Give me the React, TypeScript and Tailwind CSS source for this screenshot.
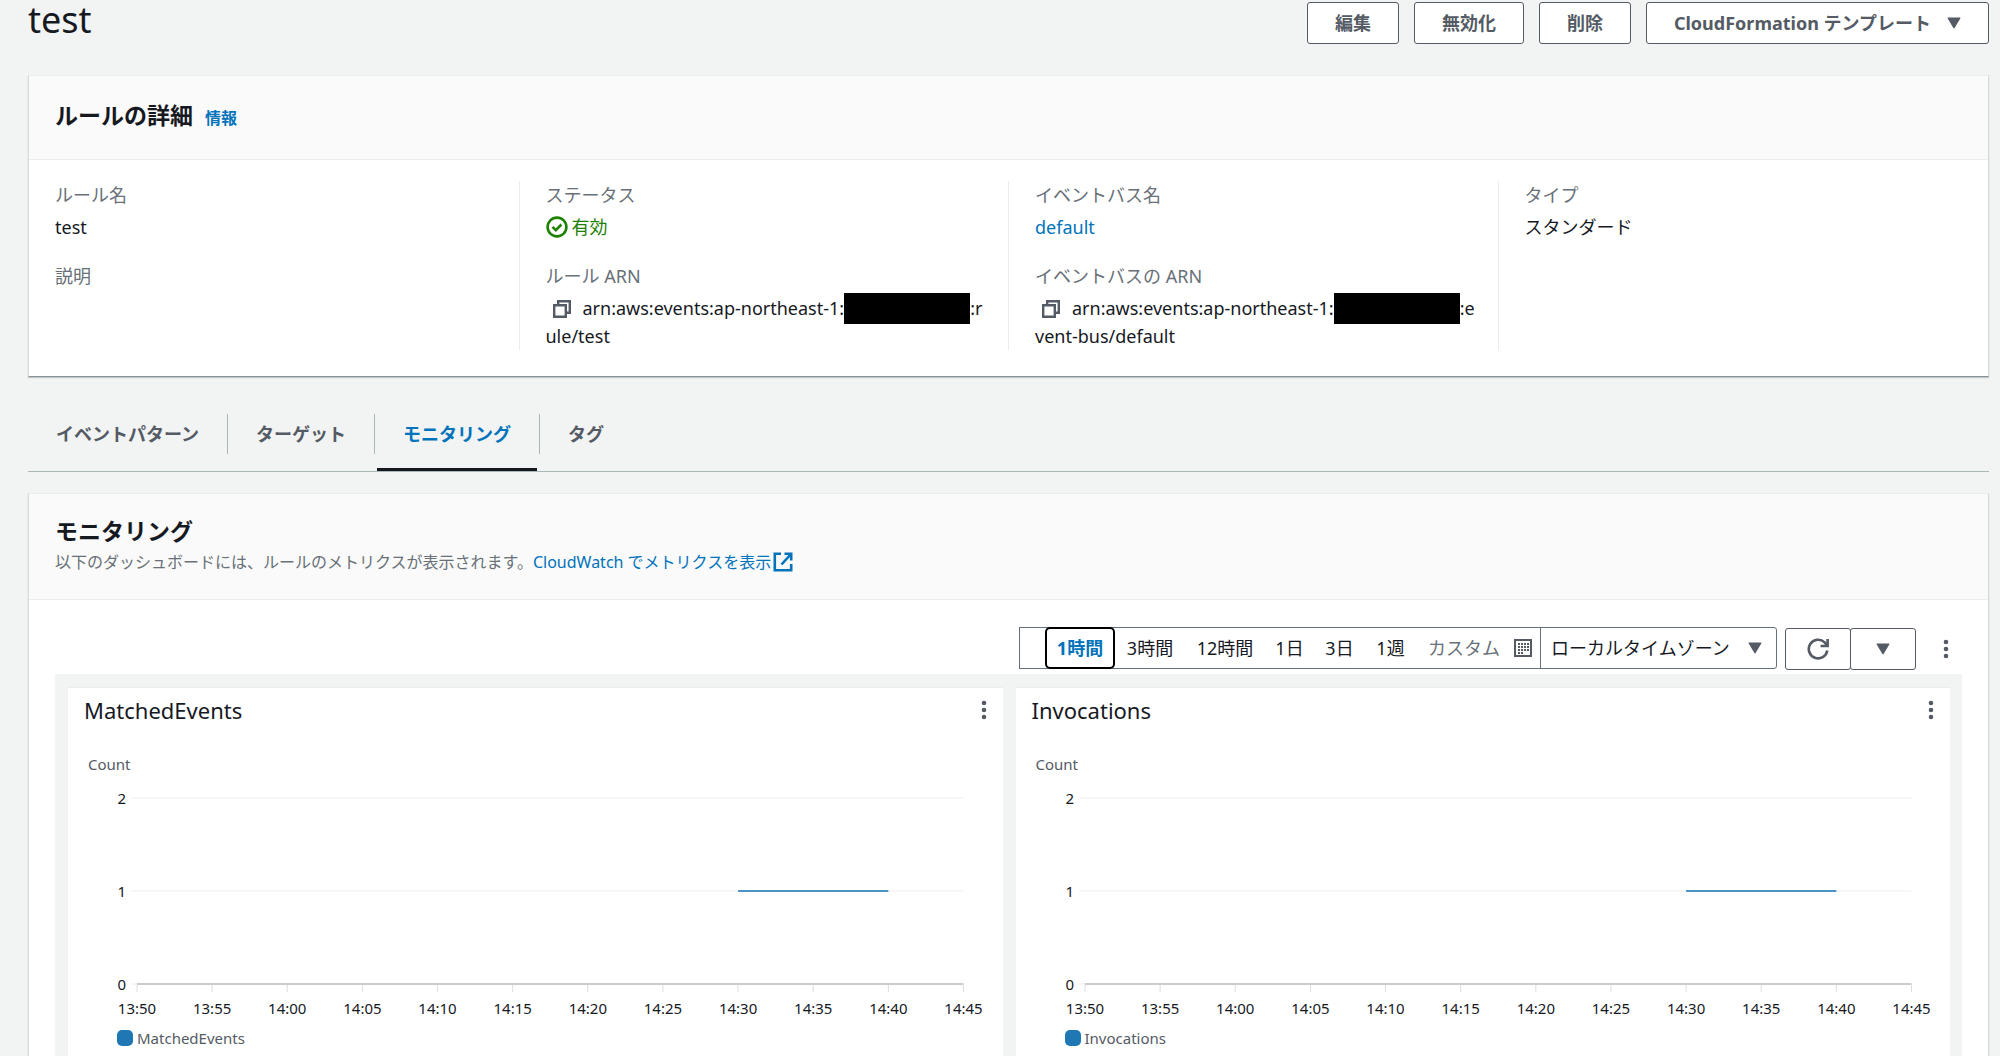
import type { ReactNode } from "react";

const DETAIL_LABEL = "text-[#687078]";
const HEADER_BUTTON =
  "flex h-[42px] items-center rounded-[3px] border border-[#545b64] bg-white px-[27px] text-[18px] font-bold text-[#545b64]";

const TABS = ["イベントパターン", "ターゲット", "モニタリング", "タグ"];
const ACTIVE_TAB = "モニタリング";

const RANGES = [
  { label: "3時間", width: "w-[70px]" },
  { label: "12時間", width: "w-[80px]" },
  { label: "1日", width: "w-[49px]" },
  { label: "3日", width: "w-[51px]" },
  { label: "1週", width: "w-[51px]" },
];

const TIMES = [
  "13:50",
  "13:55",
  "14:00",
  "14:05",
  "14:10",
  "14:15",
  "14:20",
  "14:25",
  "14:30",
  "14:35",
  "14:40",
  "14:45",
];

function Caret({ className = "" }: { className?: string }) {
  return (
    <svg
      aria-hidden
      viewBox="0 0 14 12"
      className={`h-3 w-3.5 shrink-0 fill-[#545b64] ${className}`}
    >
      <path d="M1.2 0.5h11.6c.5 0 .8.5.5.9L7.6 11c-.3.5-.9.5-1.2 0L.7 1.4C.4 1 .7.5 1.2.5z" />
    </svg>
  );
}

function CopyIcon() {
  return (
    <svg
      aria-hidden
      viewBox="0 0 18 18"
      className="h-[18px] w-[18px] fill-none stroke-[#545b64] stroke-[2.4]"
    >
      <path d="M1.2 5.2h11.6v11.6H1.2z" />
      <path d="M5.2 5V1.2h11.6v11.6H13" />
    </svg>
  );
}

function KebabIcon() {
  return (
    <svg aria-hidden viewBox="0 0 6 20" className="h-5 w-1.5 fill-[#545b64]">
      <circle cx="3" cy="3" r="2.3" />
      <circle cx="3" cy="10" r="2.3" />
      <circle cx="3" cy="17" r="2.3" />
    </svg>
  );
}

function CalendarIcon() {
  return (
    <svg aria-hidden viewBox="0 0 18 18" className="h-[18px] w-[18px]">
      <rect x="1" y="1" width="16" height="16" className="fill-none stroke-[#545b64] stroke-2" />
      <path
        d="M7 4h2v2H7zM10 4h2v2h-2zM13 4h2v2h-2zM4 7h2v2H4zM7 7h2v2H7zM10 7h2v2h-2zM13 7h2v2h-2zM4 10h2v2H4zM7 10h2v2H7zM10 10h2v2h-2zM4 13h2v2H4zM7 13h2v2H7zM4 4h2v2H4zM13 10h2v2h-2z"
        className="fill-[#545b64]"
      />
    </svg>
  );
}

function ExternalIcon() {
  return (
    <svg
      aria-hidden
      viewBox="0 0 20 20"
      className="h-5 w-5 fill-none stroke-[#0073bb] stroke-[2.6]"
    >
      <path d="M8 1.8H1.8v16.4h16.4V12" />
      <path d="M11.5 1.8h6.7v6.7M18 2L8.5 12.5" />
    </svg>
  );
}

function RefreshIcon() {
  return (
    <svg
      aria-hidden
      viewBox="0 0 22 22"
      className="h-[22px] w-[22px] fill-none stroke-[#545b64] stroke-[2.6]"
    >
      <path d="M20.3 12.5A9.3 9.3 0 1 1 17.6 4.4L20 7" />
      <path d="M20.6 1v7h-7" />
    </svg>
  );
}

function StatusIcon() {
  return (
    <svg
      aria-hidden
      viewBox="0 0 22 22"
      className="h-[22px] w-[22px] fill-none stroke-[#1d8102] stroke-[2.6]"
    >
      <circle cx="11" cy="11" r="9.4" />
      <path d="M6.5 10.8l3.3 3.3 5.6-5.6" />
    </svg>
  );
}

function Detail({ label, children }: { label: string; children?: ReactNode }) {
  return (
    <div>
      <dt className={DETAIL_LABEL}>{label}</dt>
      <dd className="mt-1 -mr-2 break-all">{children}</dd>
    </div>
  );
}

/** ARN value with its account id blacked out. */
function Arn({ service, resource }: { service: string; resource: string }) {
  return (
    <>
      <button type="button" aria-label="ARN をコピー" className="mr-3 ml-[7px] align-[-3px]">
        <CopyIcon />
      </button>
      arn:aws:events:ap-northeast-1:
      <span className="-my-1 inline-block h-[31px] w-[126px] bg-black align-[-5px]" />
      <span>{service}</span>
      <span>{resource}</span>
    </>
  );
}

function Panel({ header, children }: { header: ReactNode; children: ReactNode }) {
  return (
    <section className="border border-t-[#eaeded] border-r-[#d5dbdb] border-b-[#879196] border-l-[#d5dbdb] bg-white shadow-[0_1px_1px_0_rgba(0,28,36,0.2)]">
      <header className="border-b border-[#eaeded] bg-[#fafafa] px-[26px]">{header}</header>
      {children}
    </section>
  );
}

function MetricWidget({ title }: { title: string }) {
  return (
    <article className="min-w-0 flex-1 border-t border-[#eaeded] bg-white pb-6">
      <div className="flex h-11 items-center justify-between px-4">
        <h3 className="text-[22px] text-[#16191f]">{title}</h3>
        <button type="button" aria-label={`${title} のメニュー`}>
          <KebabIcon />
        </button>
      </div>
      <p className="mt-5 pl-5 text-[15px] leading-6 text-[#545b64]">Count</p>
      <div className="mt-[21px] mr-[39px] ml-[69px]">
        <svg
          role="img"
          aria-label={title}
          className="block h-[226px] w-full overflow-visible text-[15px]"
        >
          {[2, 1, 0].map((value, i) => (
            <g key={value}>
              <line
                x1="-6"
                x2="100%"
                y1={i * 93 + 1}
                y2={i * 93 + 1}
                className="stroke-[#eeeeee]"
              />
              <text x="-11" y={i * 93 + 7} textAnchor="end" className="fill-[#16191f]">
                {value}
              </text>
            </g>
          ))}
          {TIMES.map((time, i) => {
            const x = `${(i / (TIMES.length - 1)) * 100}%`;
            return (
              <g key={time}>
                <line x1={x} x2={x} y1="188" y2="195" className="stroke-[#dddddd]" />
                <text x={x} y="217" textAnchor="middle" className="fill-[#16191f]">
                  {time}
                </text>
              </g>
            );
          })}
          <line x1="0" x2="100%" y1="187" y2="187" className="stroke-[#cccccc] stroke-2" />
          <line
            x1={`${(8 / 11) * 100}%`}
            x2={`${(10 / 11) * 100}%`}
            y1="94"
            y2="94"
            className="stroke-[#4c92c6] stroke-2"
          />
        </svg>
      </div>
      <div className="mt-[3px] flex items-center gap-1 pl-[49px] text-[15px] leading-6 text-[#545b64]">
        <span className="h-4 w-4 rounded-[5px] bg-[#1f77b4]" />
        {title}
      </div>
    </article>
  );
}

function Toolbar() {
  return (
    <div className="flex items-start justify-end pr-[13px] text-[18px] text-[#16191f]">
      <div className="flex h-[42px] items-center border border-[#687078] pl-[25px]">
        <button
          type="button"
          className="-my-px h-[42px] w-[70px] shrink-0 rounded-[5px] border-2 border-black font-bold text-[#0073bb]"
        >
          1時間
        </button>
        {RANGES.map((range) => (
          <button key={range.label} type="button" className={`shrink-0 ${range.width}`}>
            {range.label}
          </button>
        ))}
        <button
          type="button"
          className="flex items-center gap-3.5 pr-2 pl-3 text-[#687078]"
        >
          カスタム
          <CalendarIcon />
        </button>
      </div>
      <div className="relative -ml-px h-[42px] rounded-r-[3px] border border-[#687078]">
        <select
          aria-label="タイムゾーン"
          defaultValue="local"
          className="h-full w-[235px] appearance-none bg-transparent pl-2.5"
        >
          <option value="local">ローカルタイムゾーン</option>
          <option value="utc">UTC タイムゾーン</option>
        </select>
        <Caret className="pointer-events-none absolute top-[14px] right-[14px]" />
      </div>
      <div className="mt-px ml-2 flex h-[42px]">
        <button
          type="button"
          aria-label="更新"
          className="flex w-[66px] items-center justify-center rounded-[3px] border border-[#545b64]"
        >
          <RefreshIcon />
        </button>
        <button
          type="button"
          aria-label="更新間隔"
          className="-ml-px flex w-[66px] items-center justify-center rounded-[3px] border border-[#545b64]"
        >
          <Caret />
        </button>
      </div>
      <button type="button" aria-label="その他" className="mt-3 ml-[27px]">
        <KebabIcon />
      </button>
    </div>
  );
}

export default function App() {
  return (
    <main
      lang="ja"
      className="min-h-screen bg-[#f2f3f3] pr-[11px] pl-7 font-['Noto_Sans','Noto_Sans_CJK_JP',sans-serif] text-[#16191f]"
    >
      <div className="flex h-[75px] items-start justify-between">
        <h1 className="text-[36px] leading-10">test</h1>
        <div className="mt-0.5 flex gap-[15px]">
          <button type="button" className={HEADER_BUTTON}>編集</button>
          <button type="button" className={HEADER_BUTTON}>無効化</button>
          <button type="button" className={HEADER_BUTTON}>削除</button>
          <button type="button" className={`${HEADER_BUTTON} gap-4`}>
            CloudFormation テンプレート
            <Caret />
          </button>
        </div>
      </div>

      <Panel
        header={
          <div className="flex h-[83px] items-center gap-3 pb-1">
            <h2 className="text-[23px] font-bold">ルールの詳細</h2>
            <a href="#info" className="pt-1 text-[16px] font-bold text-[#0073bb]">情報</a>
          </div>
        }
      >
        <dl className="grid grid-cols-4 pt-[21px] pb-[26px] pl-px text-[18px] leading-7">
          <div className="space-y-[21px] border-r border-[#eaeded] px-[25px]">
            <Detail label="ルール名">test</Detail>
            <Detail label="説明" />
          </div>
          <div className="space-y-[21px] border-r border-[#eaeded] px-[26px]">
            <Detail label="ステータス">
              <span className="flex items-center gap-1 text-[#1d8102]">
                <StatusIcon />
                有効
              </span>
            </Detail>
            <Detail label="ルール ARN">
              <Arn service=":r" resource="ule/test" />
            </Detail>
          </div>
          <div className="space-y-[21px] border-r border-[#eaeded] px-[26px]">
            <Detail label="イベントバス名">
              <a href="#default" className="text-[#0073bb]">default</a>
            </Detail>
            <Detail label="イベントバスの ARN">
              <Arn service=":e" resource="vent-bus/default" />
            </Detail>
          </div>
          <div className="px-[26px]">
            <Detail label="タイプ">スタンダード</Detail>
          </div>
        </dl>
      </Panel>

      <nav className="mt-[21px] mb-[21px] flex h-[74px] border-b border-[#aab7b8]">
        {TABS.map((tab, i) => (
          <div key={tab} className="flex">
            {i > 0 && <span className="mt-4 h-10 w-px bg-[#aab7b8]" />}
            <button
              type="button"
              className={`mx-0.5 border-b-[3px] px-[26px] pt-0.5 text-[18px] font-bold ${
                tab === ACTIVE_TAB
                  ? "border-[#16191f] text-[#0073bb]"
                  : "border-transparent text-[#545b64]"
              }`}
            >
              {tab}
            </button>
          </div>
        ))}
      </nav>

      <Panel
        header={
          <div className="pt-[21px] pb-[22px]">
            <h2 className="text-[23px] leading-8 font-bold">モニタリング</h2>
            <p className="flex items-center text-[16px] leading-[30px] text-[#687078]">
              以下のダッシュボードには、ルールのメトリクスが表示されます。
              <a href="#cloudwatch" className="flex items-center gap-0.5 text-[#0073bb]">
                CloudWatch でメトリクスを表示
                <ExternalIcon />
              </a>
            </p>
          </div>
        }
      >
        <div className="px-[26px] pt-[27px]">
          <Toolbar />
          <div className="mt-1 flex gap-[13px] bg-[#f2f3f3] pt-[13px] pr-3 pl-[13px]">
            <MetricWidget title="MatchedEvents" />
            <MetricWidget title="Invocations" />
          </div>
        </div>
      </Panel>
    </main>
  );
}
